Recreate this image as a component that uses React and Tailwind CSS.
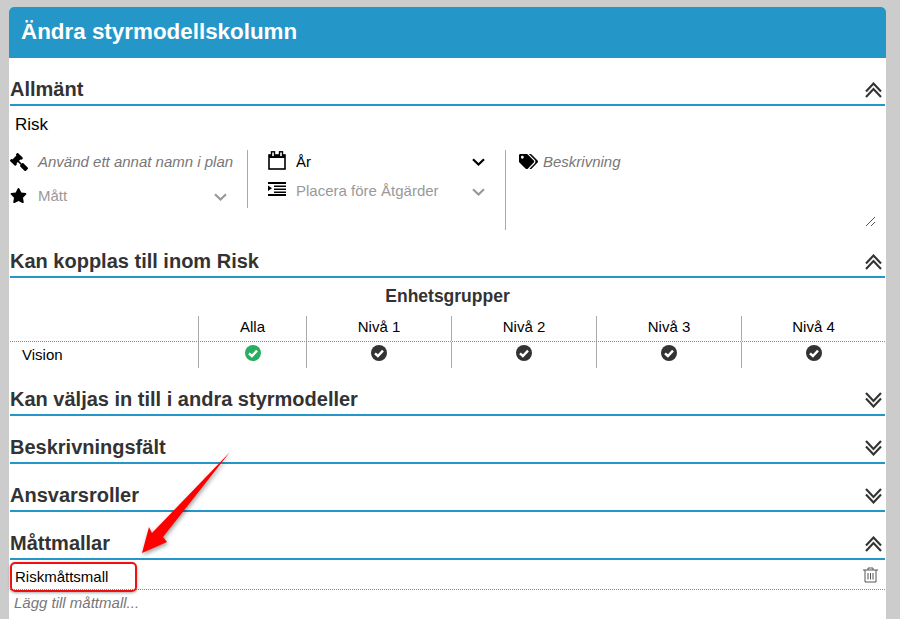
import { FaGavel, FaStar, FaTags } from "react-icons/fa";

const levels = ["Nivå 1", "Nivå 2", "Nivå 3", "Nivå 4"];

const DoubleAngle = ({ up }) => {
  return (
    <svg className={`mr-[3px] mb-[6px] ${up ? "" : "rotate-180"}`} width="17" height="16" viewBox="0 0 17 16" fill="none" stroke="#333" strokeWidth="2.1">
      <path d="M1 9.5 8.5 1.5 16 9.5M1 15 8.5 7 16 15" />
    </svg>
  );
};

const Chevron = ({ color, className = "" }) => {
  return (
    <svg className={`ml-auto mr-[20px] ${className}`} width="13" height="8" viewBox="0 0 13 8" fill="none" stroke={color} strokeWidth="2.2">
      <path d="M1 1.2 6.5 6.5 12 1.2" />
    </svg>
  );
};

const Check = ({ color }) => {
  return (
    <svg width="16" height="16" viewBox="0 0 16 16">
      <circle cx="8" cy="8" r="8" fill={color} />
      <path d="M4 8.3 6.9 11 12 5.6" fill="none" stroke="#fff" strokeWidth="2.4" />
    </svg>
  );
};

const SectionHeader = ({ title, open }) => {
  return (
    <div className="h-12 flex items-end justify-between border-b-2 border-[#2596c8] text-[#333]">
      <h2 className="text-xl leading-[30px] font-bold">{title}</h2>
      <DoubleAngle up={open} />
    </div>
  );
};

const App = () => {
  return (
    <div className="relative h-[619px] overflow-hidden bg-[#ccc] pt-[7px] pl-[9px] font-['Liberation_Sans',Arial,sans-serif]">
      <div className="w-[877px] h-[612px] bg-white rounded-t-[5px]">
        <h1 className="h-[51px] pl-3 rounded-t-[5px] bg-[#2596c8] text-white text-[22.4px] leading-[49px] font-bold">Ändra styrmodellskolumn</h1>
        <div className="pl-[1px] pr-[1px]">
          <SectionHeader title="Allmänt" open />
          <div className="h-[124px]">
            <div className="pl-[5px] h-11 text-[17px] leading-[37px] text-black">Risk</div>
            <div className="flex h-20">
              <div className="w-[238px] h-[58px] border-r border-[#aaa] flex flex-col text-[15px]">
                <div className="flex items-center h-6 gap-[10px]">
                  <FaGavel className="text-[18px] text-black shrink-0 -scale-x-100" />
                  <span className="italic text-[#777] whitespace-nowrap">Använd ett annat namn i plan</span>
                </div>
                <div className="flex items-center h-[34px] pt-[8px]">
                  <FaStar className="text-[17px] text-black shrink-0" />
                  <span className="ml-[11px] mt-[3px] text-[#999]">Mått</span>
                  <Chevron color="#999" className="mt-[3px]" />
                </div>
              </div>
              <div className="w-[258px] h-20 border-r border-[#aaa] pl-5 text-[15px]">
                <div className="flex items-center h-6">
                  <svg width="18" height="19" viewBox="0 0 18 19" fill="none" className="mb-[3px]">
                    <rect x="1" y="4" width="16" height="14" stroke="#000" strokeWidth="1.6" />
                    <rect x="1" y="4" width="16" height="3" fill="#000" />
                    <rect x="3.5" y="0.8" width="3" height="5" fill="#fff" stroke="#000" strokeWidth="1.4" />
                    <rect x="11.5" y="0.8" width="3" height="5" fill="#fff" stroke="#000" strokeWidth="1.4" />
                  </svg>
                  <span className="ml-[10px] text-black">År</span>
                  <Chevron color="#000" />
                </div>
                <div className="flex items-center h-[34px] pt-[1px]">
                  <svg width="18" height="14" viewBox="0 0 18 14" className="mb-[6px]">
                    <path d="M0 0H18V2H0ZM6 3.5H18V5H6ZM6 6.5H18V8H6ZM6 9.5H18V11H6ZM0 12H18V14H0ZM0 3.5 4 6.2 0 9Z" fill="#000" />
                  </svg>
                  <span className="ml-[10px] text-[#999]">Placera före Åtgärder</span>
                  <Chevron color="#999" />
                </div>
              </div>
              <div className="relative flex-1 pl-[13px]">
                <div className="flex items-center h-6 text-[15px]">
                  <FaTags className="text-[19px] text-black mb-[2px]" />
                  <span className="ml-[5px] italic text-[#777]">Beskrivning</span>
                </div>
                <svg className="absolute right-[9px] top-[66px]" width="11" height="11" viewBox="0 0 11 11" stroke="#555" fill="none">
                  <path d="M1 10 10 1M6 10 10 6" />
                </svg>
              </div>
            </div>
          </div>

          <SectionHeader title="Kan kopplas till inom Risk" open />
          <div className="h-[90px] text-[15px] text-black">
            <div className="h-[38px] text-center text-[17.5px] leading-[36px] font-bold text-[#333]">Enhetsgrupper</div>
            <div className="grid grid-cols-[188px_108px_145px_145px_145px_144px] h-[26px] leading-[22px] border-b border-dotted border-[#888]">
              <div />
              <div className="border-l border-[#aaa] text-center">Alla</div>
              {levels.map(level => {
                return <div key={level} className="border-l border-[#aaa] text-center">{level}</div>
              })}
            </div>
            <div className="grid grid-cols-[188px_108px_145px_145px_145px_144px] h-[26px]">
              <div className="pl-3 leading-[25px]">Vision</div>
              <div className="border-l border-[#aaa] flex justify-center pt-[3px]">
                <Check color="#27ae60" />
              </div>
              {levels.map(level => {
                return (
                  <div key={level} className="border-l border-[#aaa] flex justify-center pt-[3px]">
                    <Check color="#333" />
                  </div>
                )
              })}
            </div>
          </div>

          <SectionHeader title="Kan väljas in till i andra styrmodeller" />
          <SectionHeader title="Beskrivningsfält" />
          <SectionHeader title="Ansvarsroller" />
          <SectionHeader title="Måttmallar" open />
          <div className="flex items-center justify-between h-[30px] border-b border-dotted border-[#888] pl-[5px] pr-[7px] pt-[3px] text-[15px] text-black">
            <span className="mt-[3px]">Riskmåttsmall</span>
            <svg className="mb-[3px]" width="15" height="16" viewBox="0 0 15 16" fill="none" stroke="#555">
              <path d="M0 3H15M5 3V1H10V3M2 3V15H13V3M5 6V12.5M7.5 6V12.5M10 6V12.5" />
            </svg>
          </div>
          <div className="pl-1 text-[15px] leading-[26px] italic text-[#777]">Lägg till måttmall...</div>
        </div>
      </div>

      {/* annotation on top of the screenshot */}
      <div className="absolute left-[10px] top-[562px] w-[127px] h-[30px] rounded-[5px] border-2 border-[#f01010] shadow-[0_1px_3px_rgba(0,0,0,0.35)]" />
      <svg className="absolute left-[130px] top-[440px] drop-shadow-[1px_2px_2px_rgba(0,0,0,0.4)]" width="110" height="125" viewBox="0 0 110 125">
        <path d="M100 12 L22 93 L19 87 L12 113 L37 102 L33 97 Z" fill="#ff0000" />
      </svg>
    </div>
  );
};

export default App;
